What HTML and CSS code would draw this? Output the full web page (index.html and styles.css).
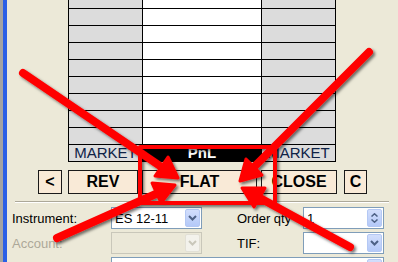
FILE: index.html
```html
<!DOCTYPE html>
<html lang="en">
<head>
    <meta charset="UTF-8">
    <title>Order Entry - FLAT</title>
    <link rel="stylesheet" href="styles.css">
</head>
<body>
    <div class="frame">
        <div class="pane">
            <!-- price ladder -->
            <div class="ladder">
                <div class="cell side top"></div><div class="cell price top"></div><div class="cell side top"></div>
                <div class="cell side"></div><div class="cell price"></div><div class="cell side"></div>
                <div class="cell side"></div><div class="cell price"></div><div class="cell side"></div>
                <div class="cell side"></div><div class="cell price"></div><div class="cell side"></div>
                <div class="cell side"></div><div class="cell price"></div><div class="cell side"></div>
                <div class="cell side"></div><div class="cell price"></div><div class="cell side"></div>
                <div class="cell side"></div><div class="cell price"></div><div class="cell side"></div>
                <div class="cell side"></div><div class="cell price"></div><div class="cell side"></div>
                <div class="cell side"></div><div class="cell price"></div><div class="cell side"></div>
                <div class="cell side foot">MARKET</div><div class="cell pnl">PnL</div><div class="cell side foot">MARKET</div>
            </div>

            <div class="actions">
                <button class="btn btn-back">&lt;</button>
                <button class="btn btn-rev">REV</button>
                <button class="btn btn-flat">FLAT</button>
                <button class="btn btn-close">CLOSE</button>
                <button class="btn btn-c">C</button>
            </div>

            <div class="rule"></div>

            <div class="order-form">
                <div class="form-row">
                    <span class="field-label">Instrument:</span>
                    <div class="combo">
                        <span>ES 12-11</span>
                        <span class="drop">
                            <svg width="9" height="6" viewBox="0 0 9 6"><path d="M1 1 L4.5 4.5 L8 1" fill="none" stroke="#4d6185" stroke-width="2"/></svg>
                        </span>
                    </div>
                    <span class="field-label right">Order qty</span>
                    <div class="combo spin">
                        <span>1</span>
                        <span class="drop spinner">
                            <svg width="7" height="4" viewBox="0 0 7 4"><path d="M0.5 3.5 L3.5 0.8 L6.5 3.5" fill="none" stroke="#4d6185" stroke-width="1.5"/></svg>
                            <svg width="7" height="4" viewBox="0 0 7 4"><path d="M0.5 0.5 L3.5 3.2 L6.5 0.5" fill="none" stroke="#4d6185" stroke-width="1.5"/></svg>
                        </span>
                    </div>
                </div>
                <div class="form-row">
                    <span class="field-label muted">Account:</span>
                    <div class="combo disabled">
                        <span></span>
                        <span class="drop">
                            <svg width="9" height="6" viewBox="0 0 9 6"><path d="M1 1 L4.5 4.5 L8 1" fill="none" stroke="#c9c7ba" stroke-width="2"/></svg>
                        </span>
                    </div>
                    <span class="field-label right">TIF:</span>
                    <div class="combo spin">
                        <span></span>
                        <span class="drop">
                            <svg width="9" height="6" viewBox="0 0 9 6"><path d="M1 1 L4.5 4.5 L8 1" fill="none" stroke="#4d6185" stroke-width="2"/></svg>
                        </span>
                    </div>
                </div>
                <div class="form-row">
                    <span class="field-label"></span>
                    <div class="combo wide">
                        <span></span>
                        <span class="drop"></span>
                    </div>
                </div>
            </div>
        </div>
    </div>

    <!-- annotation layer -->
    <svg class="overlay" width="398" height="262" viewBox="0 0 398 262">
        <defs>
            <filter id="shade" x="-10%" y="-10%" width="130%" height="130%">
                <feDropShadow dx="2" dy="2" stdDeviation="1.5" flood-color="#000" flood-opacity="0.55"/>
            </filter>
        </defs>
        <g filter="url(#shade)" fill="#f00" stroke="#f00" stroke-linejoin="round">
            <rect x="140" y="147" width="135" height="56" fill="none" stroke-width="4"/>

            <line x1="23" y1="73" x2="163" y2="168" stroke-width="8" stroke-linecap="round"/>
            <polygon points="178,178 155,176 168,157" stroke-width="3"/>

            <line x1="369" y1="52" x2="253" y2="168" stroke-width="8" stroke-linecap="round"/>
            <polygon points="240,181 246,159 262,175" stroke-width="3"/>

            <line x1="57" y1="238" x2="158" y2="193" stroke-width="8" stroke-linecap="round"/>
            <polygon points="175,185 161,203 152,183" stroke-width="3"/>

            <line x1="350" y1="247" x2="258" y2="197" stroke-width="8" stroke-linecap="round"/>
            <polygon points="242,188 265,188 254,207" stroke-width="3"/>
        </g>
    </svg>
</body>
</html>
```

FILE: styles.css
```css
* {
    margin: 0;
    padding: 0;
    box-sizing: border-box;
}

body {
    width: 398px;
    height: 262px;
    overflow: hidden;
    background: #ece9d8;
    font-family: "Liberation Sans", Arial, sans-serif;
}

.frame {
    height: 262px;
    border-left: 3px solid #a3a3a3;
}

.pane {
    height: 100%;
    border-left: 4px solid #2a5fe6;
}

/* price ladder */
.ladder {
    margin-left: 61px;
    width: 268px;
    display: grid;
    grid-template-columns: 74px 119px 74px;
    border-left: 1px solid #000;
}

.cell {
    height: 17px;
    border-right: 1px solid #000;
    border-bottom: 1px solid #000;
}

.cell.top {
    height: 9px;
}

.cell.side {
    background: #dcdcdc;
}

.cell.price {
    background: #fff;
}

.cell.foot {
    font-size: 15px;
    line-height: 16px;
    text-align: center;
    color: #0e2246;
}

.cell.pnl {
    background: #000;
    color: #fff;
    font-size: 15px;
    font-weight: bold;
    line-height: 16px;
    text-align: center;
}

/* action buttons */
.actions {
    display: flex;
    margin-top: 8px;
    padding-left: 31px;
    height: 24px;
}

.btn {
    height: 24px;
    background: #f9ead7;
    border: 1px solid #1a1a1a;
    font-family: "Liberation Sans", Arial, sans-serif;
    font-size: 16px;
    font-weight: bold;
    color: #000;
    display: flex;
    align-items: center;
    justify-content: center;
}

.btn-back {
    width: 24px;
}

.btn-rev {
    width: 70px;
    margin-left: 6px;
}

.btn-flat {
    width: 115px;
    margin-left: 4px;
}

.btn-close {
    width: 76px;
    margin-left: 4px;
}

.btn-c {
    width: 23px;
    margin-left: 7px;
}

.rule {
    margin: 7px 0 0 8px;
    width: 374px;
    border-top: 1px solid #aca899;
    border-bottom: 1px solid #fff;
}

/* order form */
.order-form {
    margin-top: 4px;
    padding-left: 5px;
    display: grid;
    row-gap: 3px;
}

.form-row {
    display: flex;
    align-items: center;
    height: 22px;
}

.field-label {
    width: 99px;
    font-size: 13px;
    color: #000;
}

.field-label.right {
    width: 66px;
    margin-left: 35px;
}

.field-label.muted {
    color: #aca899;
}

.combo {
    width: 91px;
    height: 22px;
    border: 1px solid #7f9db9;
    background: #fff;
    display: flex;
    align-items: center;
    justify-content: space-between;
    padding: 0 1px 0 3px;
    font-size: 13px;
    color: #000;
}

.combo.disabled {
    border-color: #c9c7ba;
    background: #ebe8d8;
}

.combo.spin {
    width: 81px;
}

.combo.wide {
    width: 273px;
}

.drop {
    width: 15px;
    height: 18px;
    border: 1px solid #b4c8f4;
    border-radius: 2px;
    background: linear-gradient(#d2defc, #b4c9f8);
    display: flex;
    align-items: center;
    justify-content: center;
}

.combo.disabled .drop {
    border-color: #e2e0d6;
    background: #f3f2ec;
}

.drop.spinner {
    flex-direction: column;
    justify-content: space-around;
    padding: 2px 0;
}

.overlay {
    position: absolute;
    top: 0;
    left: 0;
    pointer-events: none;
}
```
